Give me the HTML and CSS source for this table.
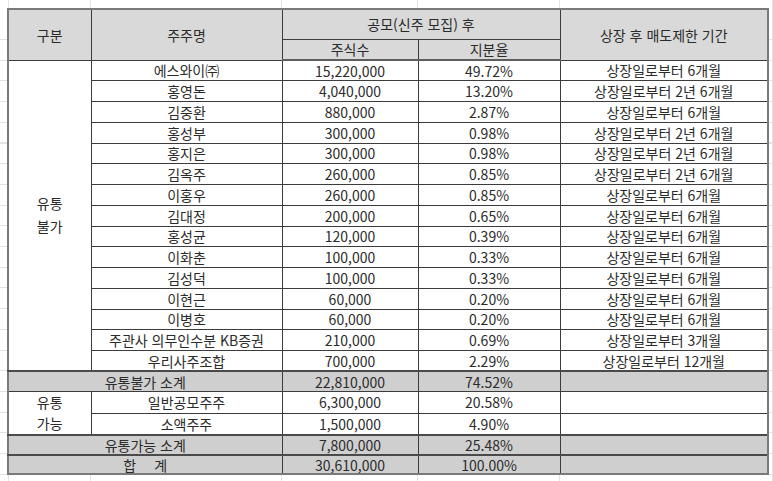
FILE: index.html
```html
<!DOCTYPE html>
<html lang="ko">
<head>
<meta charset="utf-8">
<title>보호예수 현황</title>
<link rel="stylesheet" href="styles.css">
</head>
<body>
<table class="sheet">
  <colgroup>
    <col class="c-kind"><col class="c-name"><col class="c-shares"><col class="c-ratio"><col class="c-period">
  </colgroup>
  <thead>
    <tr class="h1">
      <th rowspan="2">구분</th>
      <th rowspan="2">주주명</th>
      <th colspan="2">공모(신주 모집) 후</th>
      <th rowspan="2" class="last">상장 후 매도제한 기간</th>
    </tr>
    <tr class="h2">
      <th>주식수</th>
      <th>지분율</th>
    </tr>
  </thead>
  <tbody>
    <tr><td rowspan="15" class="kind">유통<br>불가</td><td>에스와이㈜</td><td>15,220,000</td><td>49.72%</td><td class="last">상장일로부터 6개월</td></tr>
    <tr><td>홍영돈</td><td>4,040,000</td><td>13.20%</td><td class="last">상장일로부터 2년 6개월</td></tr>
    <tr><td>김중환</td><td>880,000</td><td>2.87%</td><td class="last">상장일로부터 6개월</td></tr>
    <tr><td>홍성부</td><td>300,000</td><td>0.98%</td><td class="last">상장일로부터 2년 6개월</td></tr>
    <tr><td>홍지은</td><td>300,000</td><td>0.98%</td><td class="last">상장일로부터 2년 6개월</td></tr>
    <tr><td>김옥주</td><td>260,000</td><td>0.85%</td><td class="last">상장일로부터 2년 6개월</td></tr>
    <tr><td>이홍우</td><td>260,000</td><td>0.85%</td><td class="last">상장일로부터 6개월</td></tr>
    <tr><td>김대정</td><td>200,000</td><td>0.65%</td><td class="last">상장일로부터 6개월</td></tr>
    <tr><td>홍성균</td><td>120,000</td><td>0.39%</td><td class="last">상장일로부터 6개월</td></tr>
    <tr><td>이화춘</td><td>100,000</td><td>0.33%</td><td class="last">상장일로부터 6개월</td></tr>
    <tr><td>김성덕</td><td>100,000</td><td>0.33%</td><td class="last">상장일로부터 6개월</td></tr>
    <tr><td>이현근</td><td>60,000</td><td>0.20%</td><td class="last">상장일로부터 6개월</td></tr>
    <tr><td>이병호</td><td>60,000</td><td>0.20%</td><td class="last">상장일로부터 6개월</td></tr>
    <tr><td>주관사 의무인수분 KB증권</td><td>210,000</td><td>0.69%</td><td class="last">상장일로부터 3개월</td></tr>
    <tr><td>우리사주조합</td><td>700,000</td><td>2.29%</td><td class="last">상장일로부터 12개월</td></tr>
    <tr class="sub"><td colspan="2">유통불가 소계</td><td>22,810,000</td><td>74.52%</td><td class="last"></td></tr>
    <tr><td rowspan="2" class="kind kind-sm">유통<br>가능</td><td>일반공모주주</td><td>6,300,000</td><td>20.58%</td><td class="last"></td></tr>
    <tr><td>소액주주</td><td>1,500,000</td><td>4.90%</td><td class="last"></td></tr>
    <tr class="sub"><td colspan="2">유통가능 소계</td><td>7,800,000</td><td>25.48%</td><td class="last"></td></tr>
    <tr class="sub total"><td colspan="2">합<span class="gap"></span>계</td><td>30,610,000</td><td>100.00%</td><td class="last"></td></tr>
  </tbody>
</table>
</body>
</html>
```

FILE: styles.css
```css
html, body {
  margin: 0;
  height: 100%;
}

body {
  padding: 8px 0 0 7px;
  box-sizing: border-box;
  background-color: #fff;
  background-image:
    linear-gradient(#e3e3e3, #e3e3e3),
    linear-gradient(#e3e3e3, #e3e3e3),
    linear-gradient(#e3e3e3, #e3e3e3),
    linear-gradient(#e3e3e3, #e3e3e3),
    linear-gradient(#e3e3e3, #e3e3e3),
    linear-gradient(#e3e3e3, #e3e3e3),
    repeating-linear-gradient(to bottom, #e3e3e3 0 1px, transparent 1px 20.7px);
  background-size:
    1px 100%, 1px 100%, 1px 100%, 1px 100%, 1px 100%, 1px 100%,
    100% 460px;
  background-position:
    8px 0, 90px 0, 281px 0, 417px 0, 559px 0, 772px 0,
    0 39.3px;
  background-repeat: no-repeat;
  font-family: "Noto Sans CJK KR", "Noto Sans", sans-serif;
  color: #2b2b2b;
}

.sheet {
  border-collapse: collapse;
  table-layout: fixed;
  width: 760px;
  background: #fff;
  font-size: 14px;
  border: 2px solid #7a7a7a;
}

.c-kind { width: 83px; }
.c-name { width: 191px; }
.c-shares { width: 136px; }
.c-ratio { width: 142px; }
.c-period { width: 208px; }

.sheet th,
.sheet td {
  padding: 0;
  text-align: center;
  vertical-align: middle;
  font-weight: normal;
  line-height: 16px;
  white-space: nowrap;
  border: 1px solid #3c3c3c;
}

.sheet th {
  background: #d9d9d9;
}

.sheet thead tr.h1 { height: 30px; }
.sheet thead tr.h2 { height: 21px; }
.sheet thead tr.h2 th { border-bottom: 2px solid #5e5e5e; }

.sheet tbody tr { height: 20.75px; }
.sheet tbody tr.sub { height: 20px; }
.sheet tbody tr.total { height: 19.5px; }

.sheet .last { border-right: 2px solid #7a7a7a; }

.sheet td.kind {
  line-height: 23px;
}

.sheet td.kind-sm {
  line-height: 21px;
}

.sheet tr.sub td {
  background: #d0cfcf;
  border-top: 2px solid #4a4a4a;
}

.sheet tr.total td {
  border-bottom: 2px solid #7a7a7a;
}

.gap {
  display: inline-block;
  width: 18px;
}
```
